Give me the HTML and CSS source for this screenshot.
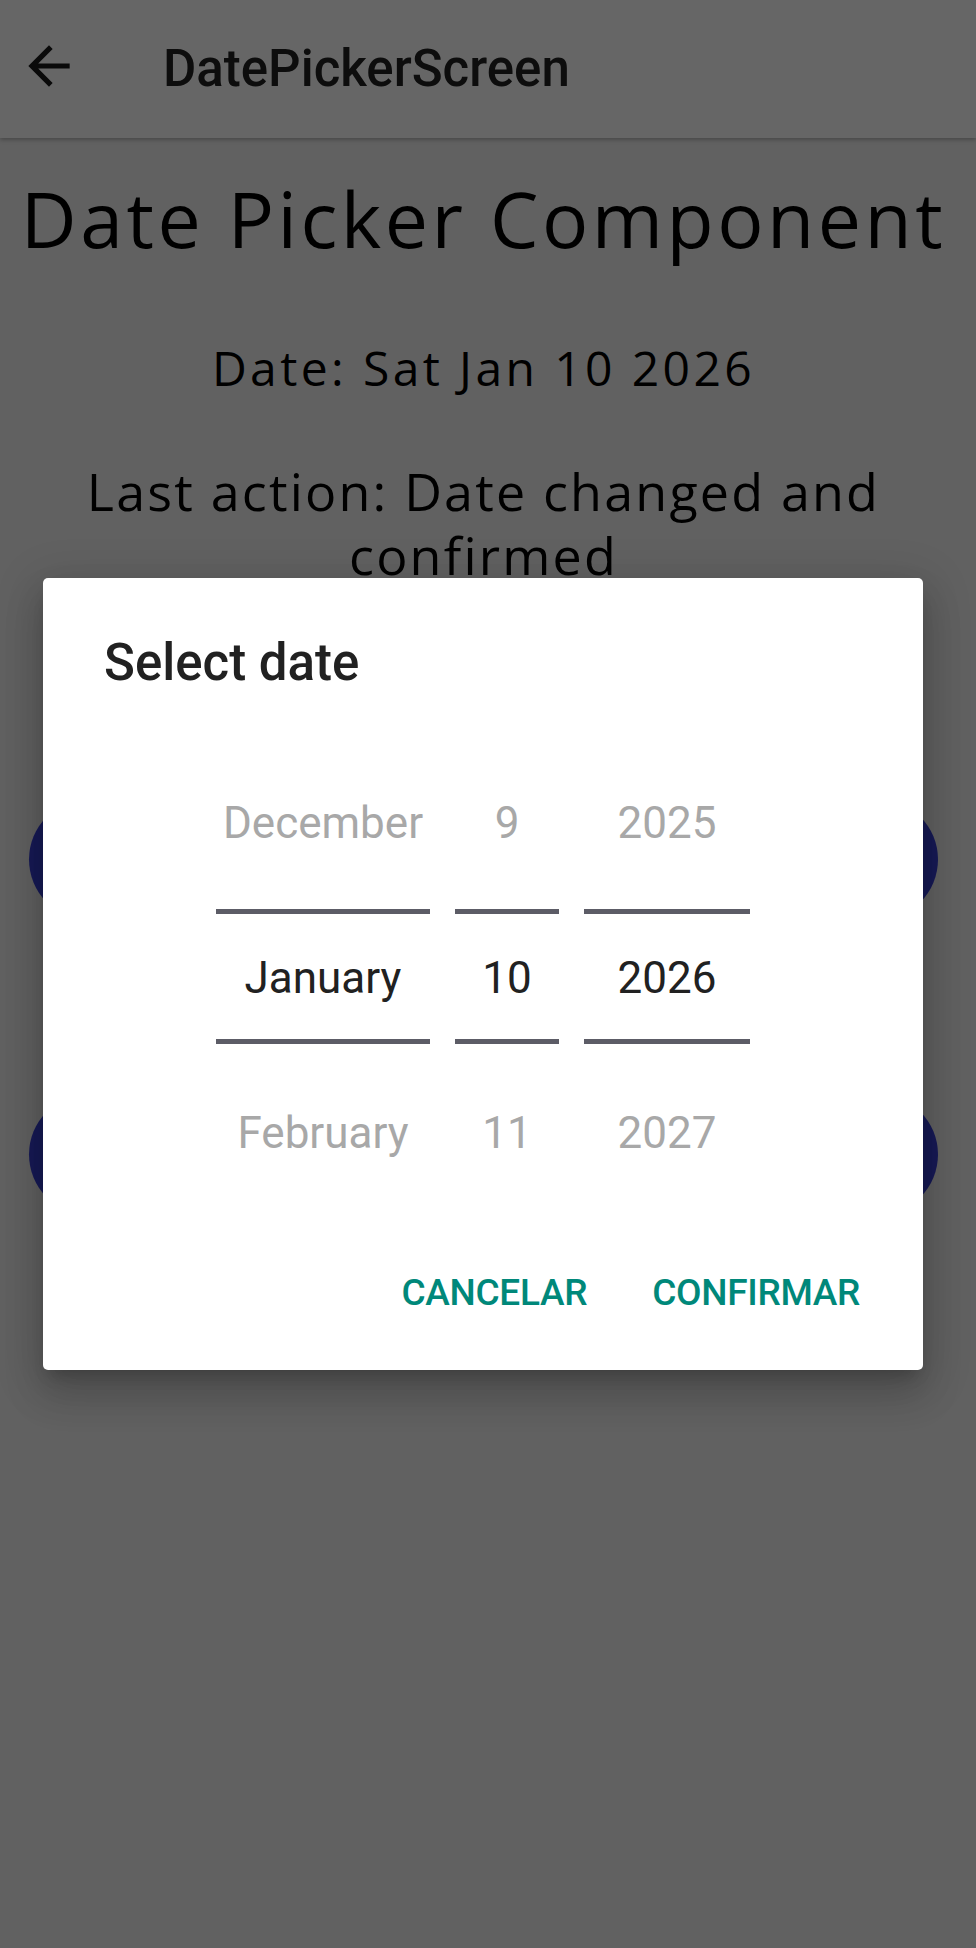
FILE: index.html
```html
<!DOCTYPE html>
<html lang="en">
<head>
<meta charset="utf-8">
<title>DatePickerScreen</title>
<link rel="stylesheet" href="styles.css">
</head>
<body>
<header class="appbar">
  <svg class="back" viewBox="0 0 24 24" width="62" height="62" aria-hidden="true">
    <path d="M20 11H7.83l5.59-5.59L12 4l-8 8 8 8 1.41-1.41L7.83 13H20v-2z" fill="#1a1a1a"/>
  </svg>
  <h1 class="appbar-title">DatePickerScreen</h1>
</header>

<main class="content">
  <h2 class="heading">Date Picker Component</h2>
  <p class="date-line">Date: Sat Jan 10 2026</p>
  <p class="action-line">Last action: Date changed and confirmed</p>
  <button class="pill pill-first" aria-label="Open date picker"></button>
  <button class="pill" aria-label="Open date picker with limits"></button>
</main>

<div class="scrim">
  <div class="dialog" role="dialog">
    <div class="dialog-title">Select date</div>
    <div class="picker">
      <div class="col col-month">
        <div class="cell">December</div>
        <div class="cell sel">January</div>
        <div class="cell">February</div>
      </div>
      <div class="col col-day">
        <div class="cell">9</div>
        <div class="cell sel">10</div>
        <div class="cell">11</div>
      </div>
      <div class="col col-year">
        <div class="cell">2025</div>
        <div class="cell sel">2026</div>
        <div class="cell">2027</div>
      </div>
    </div>
    <div class="actions">
      <button class="btn">CANCELAR</button>
      <button class="btn">CONFIRMAR</button>
    </div>
  </div>
</div>
</body>
</html>
```

FILE: styles.css
```css
* { box-sizing: border-box; }

html, body {
  margin: 0;
  padding: 0;
}

body {
  width: 976px;
  height: 1948px;
  overflow: hidden;
  background: #f2f2f2;
  font-family: "Roboto", "Liberation Sans", sans-serif;
  position: relative;
}

.appbar {
  height: 138px;
  background: #ffffff;
  display: flex;
  align-items: center;
  padding-left: 18px;
  box-shadow: 0 2px 4px rgba(0, 0, 0, 0.25);
  position: relative;
  z-index: 1;
}

.back {
  display: block;
  margin-bottom: 6px;
}

.appbar-title {
  margin: 0 0 0 83px;
  font-family: "Roboto", sans-serif;
  font-weight: 500;
  font-size: 51px;
  line-height: 60px;
  color: #212121;
}

.content {
  padding: 0 9px 0 0;
  text-align: center;
  font-family: "Open Sans", "Liberation Sans", sans-serif;
  color: #000;
}

.heading {
  margin: 31px 0 0;
  font-weight: 400;
  font-size: 77px;
  line-height: 100px;
  letter-spacing: 3.5px;
}

.date-line {
  margin: 69px 0 0;
  font-size: 48px;
  line-height: 60px;
  letter-spacing: 3.4px;
}

.action-line {
  margin: 61px auto 0;
  width: 860px;
  font-size: 52px;
  line-height: 64px;
  letter-spacing: 2.2px;
}

.pill {
  display: block;
  width: 909px;
  height: 121px;
  margin: 212px 0 0 29px;
  border: none;
  border-radius: 61px;
  background: #3a42d8;
}

.pill + .pill {
  margin-top: 174px;
}

.scrim {
  position: absolute;
  inset: 0;
  z-index: 5;
  background: rgba(0, 0, 0, 0.6);
  display: flex;
  align-items: center;
  padding-left: 43px;
}

.dialog {
  width: 880px;
  background: #fff;
  border-radius: 5px;
  padding-bottom: 29px;
  box-shadow: 0 11px 15px -7px rgba(0, 0, 0, 0.2),
              0 24px 38px 3px rgba(0, 0, 0, 0.14),
              0 9px 46px 8px rgba(0, 0, 0, 0.12);
}

.dialog-title {
  padding: 55px 61px 0;
  font-weight: 500;
  font-size: 51px;
  line-height: 60px;
  color: #212121;
}

.picker {
  margin-top: 53px;
  display: flex;
  justify-content: center;
  gap: 25px;
}

.col {
  display: flex;
  flex-direction: column;
}

.col-month { width: 214px; }
.col-day { width: 104px; }
.col-year { width: 166px; }

.cell {
  height: 155px;
  line-height: 155px;
  text-align: center;
  font-size: 44px;
  color: #a8a8a8;
}

.cell.sel {
  height: 135px;
  margin: 8px 0 12px;
  padding-top: 4px;
  line-height: 121px;
  border-top: 5px solid #5c5c66;
  border-bottom: 5px solid #5c5c66;
  color: #212121;
}

.actions {
  margin-top: 32px;
  padding-right: 41px;
  display: flex;
  justify-content: flex-end;
  gap: 21px;
}

.btn {
  height: 98px;
  padding: 0 22px;
  border: none;
  background: transparent;
  font-family: "Roboto", sans-serif;
  font-weight: 500;
  font-size: 37px;
  letter-spacing: -0.3px;
  color: #00887a;
}
```
